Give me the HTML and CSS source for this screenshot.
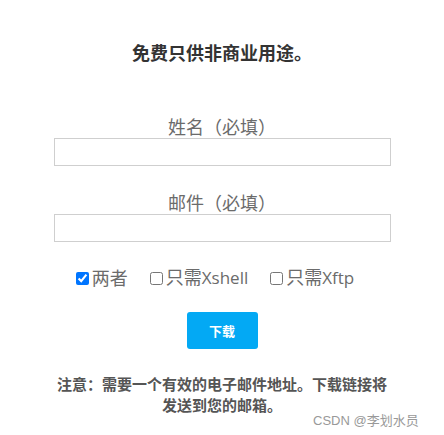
FILE: index.html
```html
<!DOCTYPE html>
<html lang="zh-CN">
<head>
<meta charset="utf-8">
<link rel="stylesheet" href="styles.css">
</head>
<body>
<div class="page">
  <h1 class="title">免费只供非商业用途。</h1>
  <label class="field-label">姓名（必填）</label>
  <input class="field" type="text">
  <label class="field-label second">邮件（必填）</label>
  <input class="field" type="text">
  <div class="choices">
    <label class="choice"><input type="checkbox" checked><span>两者</span></label>
    <label class="choice"><input type="checkbox"><span>只需<span class="latin">Xshell</span></span></label>
    <label class="choice"><input type="checkbox"><span>只需<span class="latin">Xftp</span></span></label>
  </div>
  <button class="download">下载</button>
  <p class="note">注意：需要一个有效的电子邮件地址。下载链接将<br>发送到您的邮箱。</p>
  <div class="watermark">CSDN @<span class="cjk">李划水员</span></div>
</div>
</body>
</html>
```
FILE: styles.css
```css
html, body {
  margin: 0;
  padding: 0;
  background: #ffffff;
}
body {
  font-family: "Noto Sans CJK SC", sans-serif;
  width: 444px;
  height: 435px;
  overflow: hidden;
}
.page {
  position: relative;
  height: 435px;
  display: flex;
  flex-direction: column;
  align-items: center;
  padding-top: 40px;
  box-sizing: border-box;
}
.title {
  margin: 0;
  font-size: 18px;
  line-height: 25px;
  font-weight: bold;
  color: #333333;
}
.field-label {
  display: block;
  margin-top: 49px;
  font-size: 18px;
  line-height: 24px;
  color: #6b6b6b;
}
.field-label.second {
  margin-top: 24px;
}
.field {
  display: block;
  width: 337px;
  height: 28px;
  box-sizing: border-box;
  border: 1px solid #cfcfcf;
  margin: 0 0 0 1px;
  padding: 0;
  outline: none;
}
.choices {
  display: flex;
  align-items: center;
  margin-top: 22px;
  margin-right: 14px;
  gap: 22px;
  line-height: 24px;
}
.choice {
  display: flex;
  align-items: center;
  font-size: 18px;
  color: #6b6b6b;
}
.latin {
  font-family: "Open Sans", sans-serif;
  font-size: 17px;
}
.choice input {
  width: 13px;
  height: 13px;
  margin: 2px 3px 0 0;
}
.download {
  margin-top: 22px;
  width: 71px;
  height: 37px;
  border: none;
  border-radius: 3px;
  background: #03a9f4;
  color: #ffffff;
  font-family: "Noto Sans CJK SC", sans-serif;
  font-size: 13px;
  font-weight: bold;
  padding: 0;
}
.note {
  margin: 24px 0 0 0;
  font-size: 15px;
  line-height: 21px;
  font-weight: bold;
  color: #555555;
  text-align: center;
}
.watermark {
  position: absolute;
  left: 313px;
  top: 410px;
  font-size: 13px;
  line-height: 20px;
  color: #999999;
  font-family: "Liberation Sans", sans-serif;
}
.watermark .cjk {
  font-family: "Noto Sans CJK SC", sans-serif;
}
```
